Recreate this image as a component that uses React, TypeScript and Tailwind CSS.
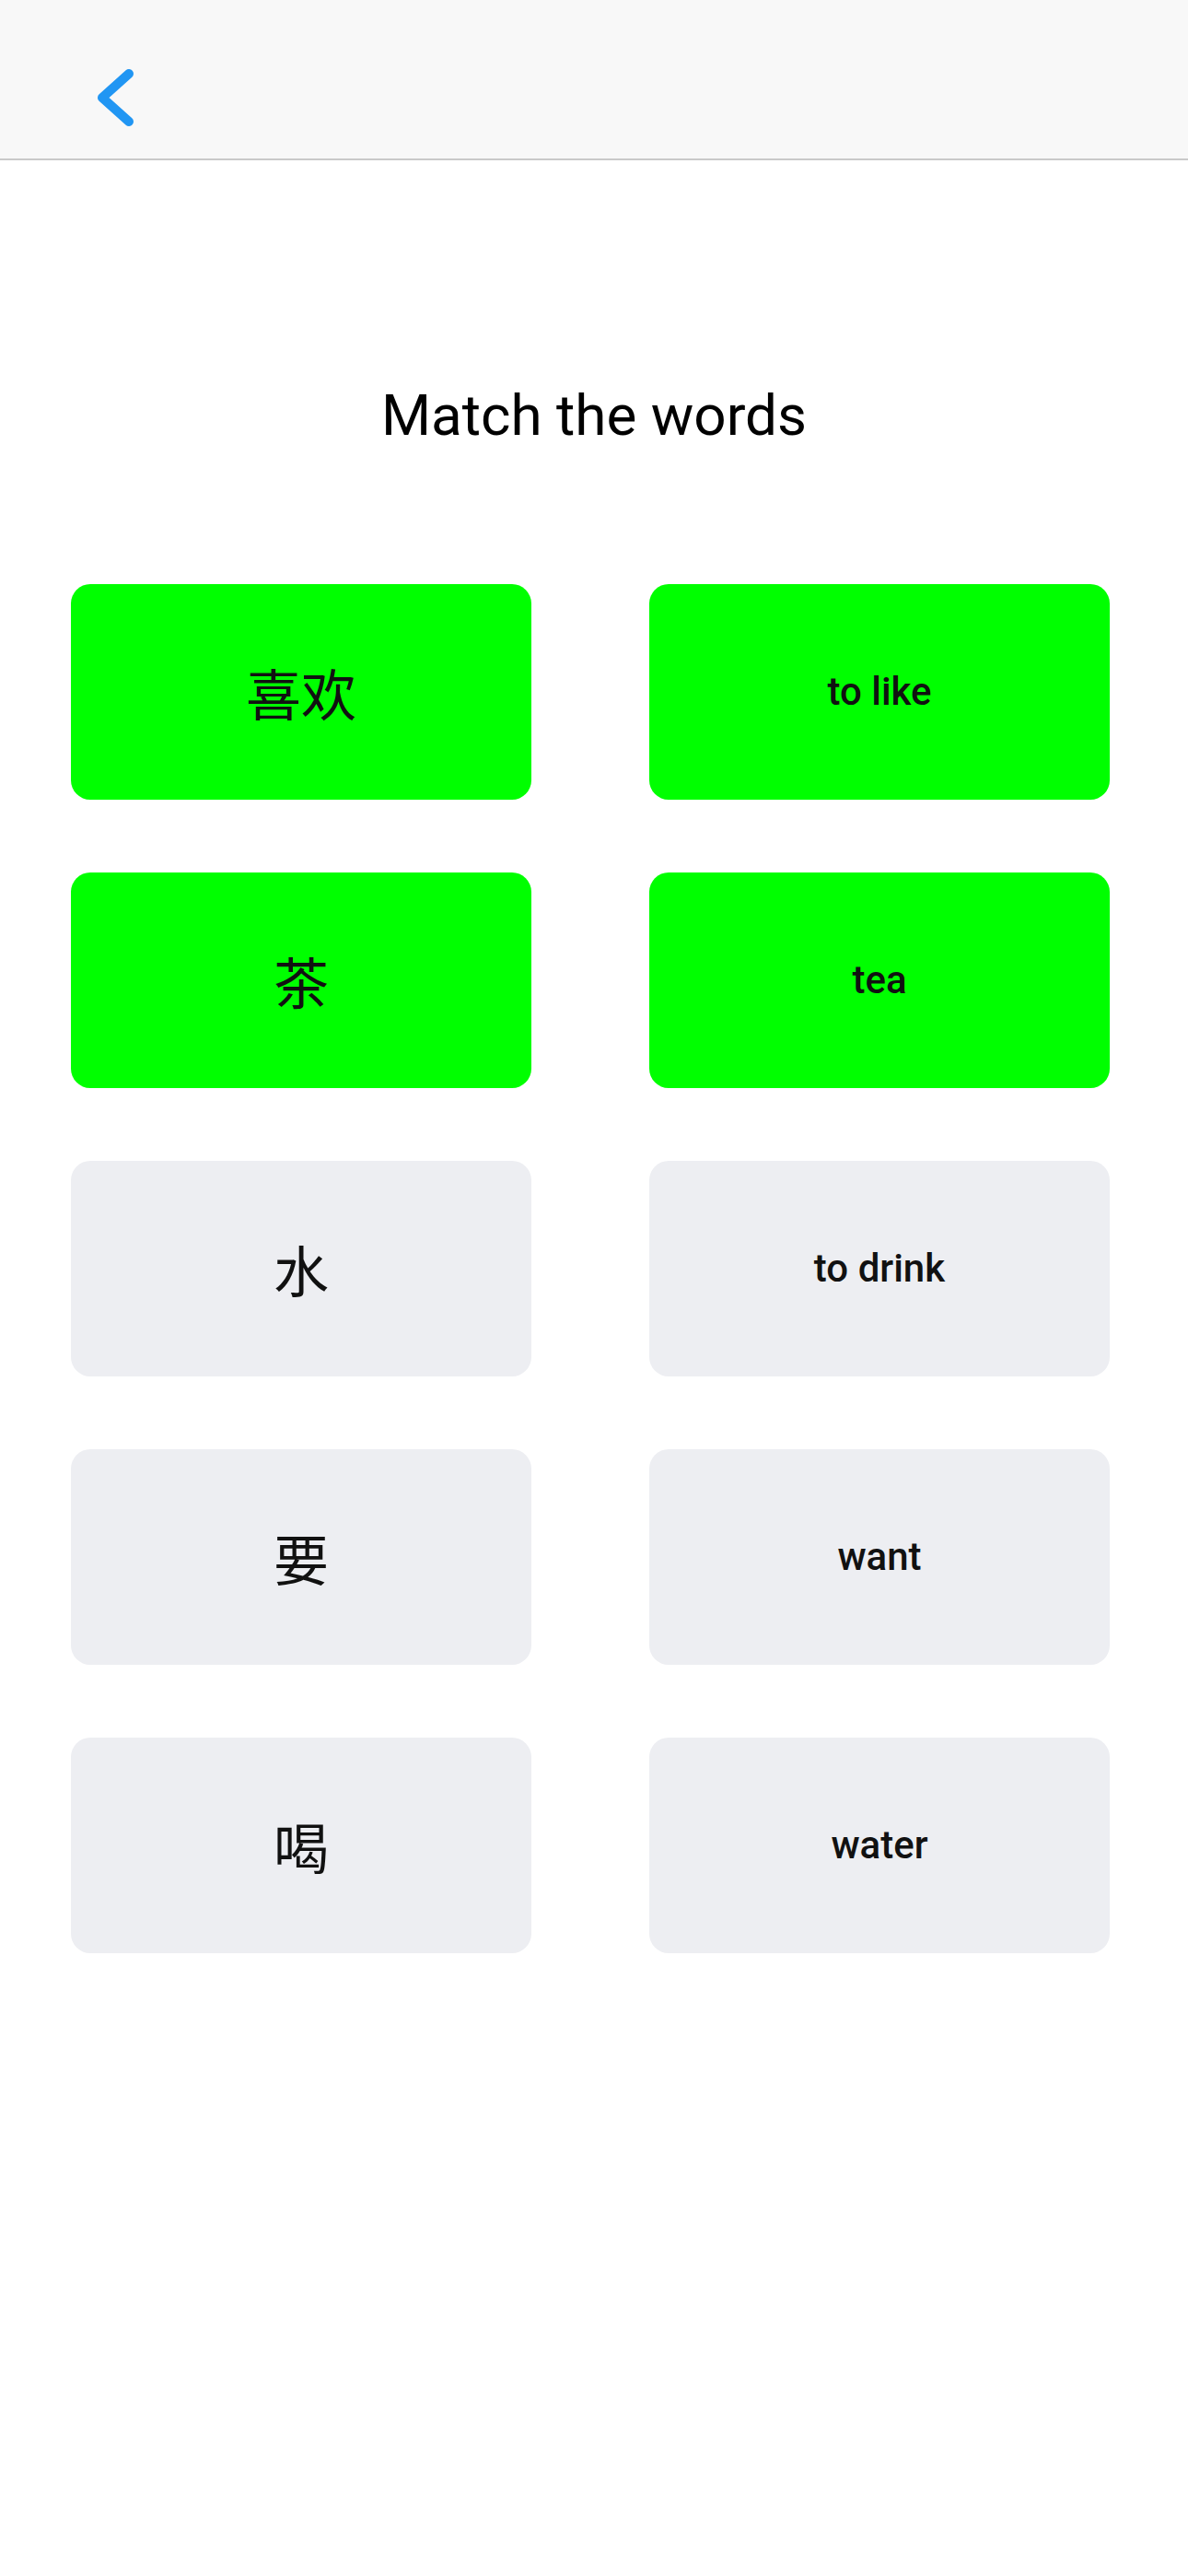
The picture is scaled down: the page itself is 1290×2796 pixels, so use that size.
import React from "react";

type Card = { text: string; matched: boolean; cjk: boolean };

const rows: [Card, Card][] = [
  [
    { text: "喜欢", matched: true, cjk: true },
    { text: "to like", matched: true, cjk: false },
  ],
  [
    { text: "茶", matched: true, cjk: true },
    { text: "tea", matched: true, cjk: false },
  ],
  [
    { text: "水", matched: false, cjk: true },
    { text: "to drink", matched: false, cjk: false },
  ],
  [
    { text: "要", matched: false, cjk: true },
    { text: "want", matched: false, cjk: false },
  ],
  [
    { text: "喝", matched: false, cjk: true },
    { text: "water", matched: false, cjk: false },
  ],
];

function WordCard({ card }: { card: Card }) {
  return (
    <div
      className={
        "h-[234px] rounded-[21px] flex items-center justify-center text-[#111111] " +
        (card.matched ? "bg-[#00ff00]" : "bg-[#edeef2]")
      }
    >
      {card.cjk ? (
        <span className="text-[60px] leading-none font-['Noto_Sans_CJK_SC',sans-serif]">
          {card.text}
        </span>
      ) : (
        <span className="text-[42px] leading-none font-medium font-['Roboto',sans-serif]">
          {card.text}
        </span>
      )}
    </div>
  );
}

export default function App() {
  return (
    <div className="w-[1290px] min-h-[2796px] bg-white font-['Roboto',sans-serif]">
      <header className="h-[174px] bg-[#f8f8f8] border-b-2 border-[#c9c9c9] flex items-start">
        <svg
          className="ml-[106px] mt-[75px]"
          width="40"
          height="62"
          viewBox="0 0 40 62"
          fill="none"
        >
          <path
            d="M34 5 L5 31 L34 57"
            stroke="#2196F3"
            strokeWidth="10"
            strokeLinecap="round"
            strokeLinejoin="round"
          />
        </svg>
      </header>
      <h1 className="mt-[246px] text-center text-[62px] leading-[62px] font-normal text-black">
        Match the words
      </h1>
      <div className="mt-[152px] ml-[77px] grid grid-cols-[500px_500px] gap-x-[128px] gap-y-[79px]">
        {rows.map(([l, r], i) => (
          <React.Fragment key={i}>
            <WordCard card={l} />
            <WordCard card={r} />
          </React.Fragment>
        ))}
      </div>
    </div>
  );
}
